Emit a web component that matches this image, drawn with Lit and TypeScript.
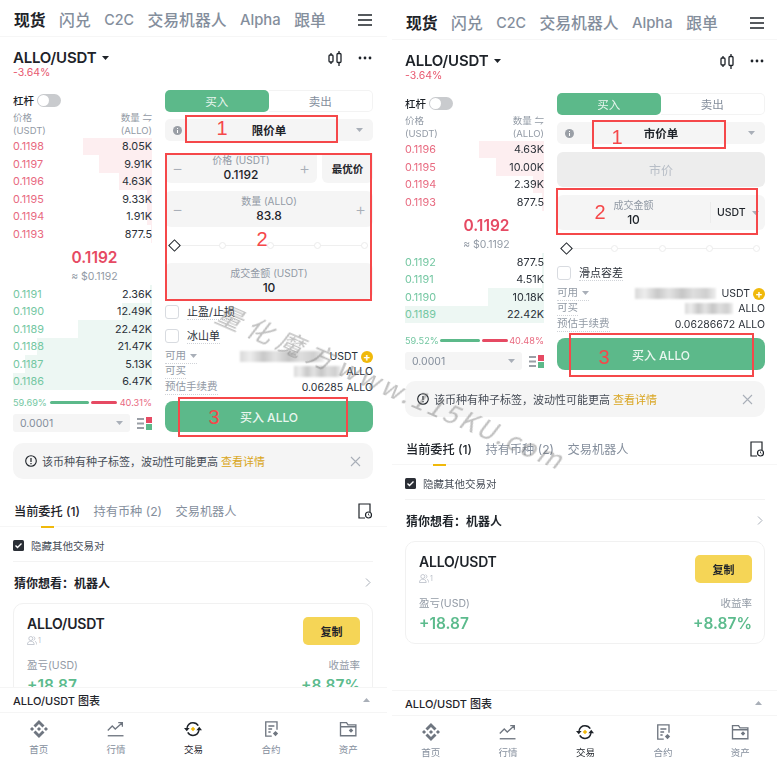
import { LitElement, html, css, svg } from "lit";
import { customElement, property } from "lit/decorators.js";

type Row = { p: string; q: string; from: number };
type Note = { x: number; y: number; w: number; h: number; n: string; nx: number; ny: number };

const BOOK: Record<string, { asks: Row[]; bids: Row[]; g: string; r: string; gw: number; rw: number }> = {
  limit: {
    asks: [
      { p: "0.1198", q: "8.05K", from: 70 },
      { p: "0.1197", q: "9.91K", from: 86 },
      { p: "0.1196", q: "4.63K", from: 106 },
      { p: "0.1195", q: "9.33K", from: 134 },
      { p: "0.1194", q: "1.91K", from: 134 },
      { p: "0.1193", q: "877.5", from: 138 },
    ],
    bids: [
      { p: "0.1191", q: "2.36K", from: 137 },
      { p: "0.1190", q: "12.49K", from: 109 },
      { p: "0.1189", q: "22.42K", from: 65 },
      { p: "0.1188", q: "21.47K", from: 24 },
      { p: "0.1187", q: "5.13K", from: 12 },
      { p: "0.1186", q: "6.47K", from: 0 },
    ],
    g: "59.69%",
    r: "40.31%",
    gw: 39,
    rw: 26,
  },
  market: {
    asks: [
      { p: "0.1196", q: "4.63K", from: 74 },
      { p: "0.1195", q: "10.00K", from: 91 },
      { p: "0.1194", q: "2.39K", from: 128 },
      { p: "0.1193", q: "877.5", from: 137 },
    ],
    bids: [
      { p: "0.1192", q: "877.5", from: 137 },
      { p: "0.1191", q: "4.51K", from: 137 },
      { p: "0.1190", q: "10.18K", from: 83 },
      { p: "0.1189", q: "22.42K", from: 0 },
    ],
    g: "59.52%",
    r: "40.48%",
    gw: 40,
    rw: 26,
  },
};

const NOTES: Record<string, Note[]> = {
  limit: [
    { x: 185, y: 115, w: 153, h: 28, n: "1", nx: 222, ny: 128 },
    { x: 165, y: 153, w: 207, h: 148, n: "2", nx: 262, ny: 239 },
    { x: 178, y: 397, w: 170, h: 40, n: "3", nx: 214, ny: 417 },
  ],
  market: [
    { x: 200, y: 117, w: 134, h: 29, n: "1", nx: 225, ny: 134 },
    { x: 164, y: 185, w: 202, h: 47, n: "2", nx: 208, ny: 209 },
    { x: 177, y: 330, w: 185, h: 44, n: "3", nx: 212, ny: 354 },
  ],
};

const ico = (w: number, h: number, vb: string, body: unknown, cls = "") =>
  html`<svg class=${cls} width=${w} height=${h} viewBox=${vb} fill="none">${body}</svg>`;

const NAV = [
  {
    t: "首页",
    i: svg`<path fill="#6f7680" d="M16.624 13.92l2.717 2.716-7.353 7.353-7.353-7.352 2.717-2.717 4.636 4.66 4.636-4.66zm4.637-4.636L24 12l-2.715 2.716L18.568 12l2.693-2.716zm-9.272 0L14.705 12l-2.716 2.717L9.272 12l2.717-2.715zm-9.272 0L5.409 12l-2.692 2.692L0 12l2.717-2.716zM11.989.012l7.353 7.329-2.717 2.715-4.636-4.635-4.636 4.66-2.717-2.716 7.353-7.353z"/>`,
  },
  {
    t: "行情",
    i: svg`<path d="M1 14l6-6 4 4 9-8M15 3.500h5.500V9" stroke="#6f7680" stroke-width="1.700"/><path d="M1 21h21" stroke="#6f7680" stroke-width="1.800"/>`,
  },
  {
    t: "交易",
    on: true,
    i: svg`<path d="M4 10.500C5 6 8.500 3.500 12 3.500c3 0 5.500 1.300 7 4M20 13.500c-1 4.500-4.500 7-8 7-3 0-5.500-1.300-7-4" stroke="#1e2329" stroke-width="2"/><path d="M0 10.500h7.500L3.700 15zM24 13.500h-7.500L20.300 9z" fill="#1e2329"/><path d="M12 9l3 3-3 3-3-3z" fill="#f0b90b"/>`,
  },
  {
    t: "合约",
    i: svg`<path d="M20 13V2.500H5v19h8" stroke="#6f7680" stroke-width="1.800"/><path d="M8.500 8h8M8.500 12h5M8.500 16h3" stroke="#6f7680" stroke-width="1.800"/><path d="M18 14.500l3.500 3.500-3.500 3.500-3.500-3.500z" fill="#6f7680"/>`,
  },
  {
    t: "资产",
    i: svg`<path d="M2 9V3.500h8l2 3h10.500V21H2V9h20" stroke="#6f7680" stroke-width="1.800"/><path d="M16 11l3 3-3 3-3-3z" fill="#6f7680"/>`,
  },
];

const caret = html`<svg class="caret" width="7" height="4" viewBox="0 0 7 4"><path d="M0 0h7L3.500 4z" fill="#a9afb8"/></svg>`;

@customElement("trade-screen")
class TradeScreen extends LitElement {
  @property() mode = "limit";

  static styles = css`
    :host {
      display: block;
    }
    .screen {
      position: relative;
      display: flex;
      flex-direction: column;
      height: 768px;
      width: 387px;
      color: #1e2329;
      font-family: "Inter", "Noto Sans CJK SC", sans-serif;
      background: #fff;
    }
    .screen.market {
      margin-top: 3px;
    }
    .top {
      display: flex;
      align-items: center;
      gap: 13.500px;
      height: 37px;
      flex: none;
      padding: 3px 15px 0 14px;
      box-sizing: border-box;
      border-bottom: 1px solid #f6f6f6;
      font-size: 15.800px;
      font-weight: 500;
      color: #848e9c;
    }
    .top .lat {
      font-size: 14.300px;
    }
    .top .alpha {
      font-size: 14.800px;
    }
    .top .on {
      color: #1e2329;
      font-weight: 700;
    }
    .top .menu {
      margin-left: auto;
    }
    .scroll {
      flex: 1;
      overflow: hidden;
      min-height: 0;
    }
    .pair {
      display: flex;
      align-items: flex-start;
      justify-content: space-between;
      padding: 11px 15px 0 13px;
      height: 53px;
      box-sizing: border-box;
    }
    .sym {
      display: flex;
      align-items: center;
      gap: 6px;
      font-size: 15px;
      font-weight: 600;
      line-height: 20px;
      letter-spacing: -0.2px;
    }
    .pct {
      font-size: 10.500px;
      line-height: 12px;
      color: #e8586f;
      margin-top: -1px;
    }
    .tools {
      display: flex;
      align-items: center;
      gap: 16px;
      height: 20px;
    }
    .main {
      display: flex;
      gap: 13px;
      padding: 0 14px 0 13px;
    }
    .book {
      width: 139px;
      flex: none;
      display: flex;
      flex-direction: column;
    }
    .lev {
      display: flex;
      align-items: center;
      gap: 3px;
      height: 20px;
      font-size: 10.500px;
      font-weight: 500;
    }
    .switch {
      width: 24px;
      height: 13px;
      border-radius: 7px;
      background: #c9cbce;
      position: relative;
    }
    .switch::after {
      content: "";
      position: absolute;
      left: 1px;
      top: 1px;
      width: 11px;
      height: 11px;
      border-radius: 50%;
      background: #fff;
    }
    .bh {
      display: flex;
      justify-content: space-between;
      font-size: 9.500px;
      line-height: 13px;
      color: #929aa5;
      height: 27.750px;
      padding-top: 1px;
      box-sizing: border-box;
    }
    .bh div:last-child {
      text-align: right;
    }
    .row {
      position: relative;
      display: flex;
      justify-content: space-between;
      align-items: center;
      height: 17.500px;
      font-size: 10.800px;
    }
    .row i {
      position: absolute;
      right: 0;
      top: 0;
      bottom: 0;
    }
    .row span {
      position: relative;
    }
    .ask b {
      color: #e8697f;
      font-weight: 400;
    }
    .bid b {
      color: #74c7a2;
      font-weight: 400;
    }
    .ask i {
      background: #fdeef0;
    }
    .bid i {
      background: #edf7f3;
    }
    .ask .vol,
    .bid .vol {
      color: #2b3139;
    }
    .mid {
      height: 42.500px;
      display: flex;
      flex-direction: column;
      align-items: center;
      padding-left: 24px;
      box-sizing: border-box;
    }
    .mid b {
      font-size: 15.500px;
      font-weight: 600;
      color: #e64a63;
      line-height: 18px;
      margin-top: 6px;
    }
    .mid span {
      font-size: 10.500px;
      line-height: 13px;
      margin-top: 3px;
      color: #929aa5;
    }
    .ratio {
      margin-top: auto;
      display: flex;
      align-items: center;
      justify-content: space-between;
      font-size: 9.200px;
      height: 12px;
      margin-bottom: 6px;
    }
    .ratio .g {
      color: #74c7a2;
    }
    .ratio .r {
      color: #e8697f;
    }
    .bars {
      display: flex;
      gap: 2px;
    }
    .bars u {
      height: 3px;
      border-radius: 2px;
      display: block;
    }
    .prec {
      display: flex;
      align-items: center;
      gap: 7px;
      height: 18px;
      font-size: 10.500px;
      color: #848e9c;
    }
    .prec div {
      flex: 1;
      align-self: stretch;
      display: flex;
      align-items: center;
      justify-content: space-between;
      padding: 0 7px;
      background: #f5f5f5;
      border-radius: 3px;
    }
    .form {
      width: 208px;
      flex: none;
      display: flex;
      flex-direction: column;
    }
    .side {
      display: flex;
      height: 22px;
      font-size: 11.500px;
      border-radius: 5px;
    }
    .side div {
      flex: 1;
      display: flex;
      align-items: center;
      justify-content: center;
      border: 1px solid #f3f3f3;
      border-left: none;
      border-radius: 0 5px 5px 0;
      color: #848e9c;
    }
    .side .buy {
      background: #5cb98a;
      color: #e9f6ef;
      border: none;
      border-radius: 5px;
    }
    .type {
      margin-top: 7px;
      height: 22px;
      display: flex;
      align-items: center;
      justify-content: space-between;
      background: #f5f5f5;
      border-radius: 5px;
      padding: 0 10px 0 8px;
      font-size: 11.500px;
      font-weight: 600;
    }
    .pricerow {
      margin-top: 12px;
      display: flex;
      gap: 5px;
      height: 30px;
    }
    .box {
      background: #f5f5f5;
      border-radius: 6px;
      display: flex;
      align-items: center;
      justify-content: space-between;
      padding: 0 7px;
      color: #a9afb8;
      font-size: 17px;
      font-weight: 300;
    }
    .pricerow .box {
      flex: 1;
      border-radius: 0 0 6px 6px;
    }
    .best {
      width: 51px;
      flex: none;
      background: #f5f5f5;
      border-radius: 0 0 6px 6px;
      display: flex;
      align-items: center;
      justify-content: center;
      font-size: 10.500px;
      font-weight: 600;
    }
    .qty {
      height: 36px;
      margin-top: 8px;
    }
    .fld {
      flex: 1;
      display: flex;
      flex-direction: column;
      align-items: center;
      min-width: 0;
    }
    .fld small {
      font-size: 10px;
      font-weight: 400;
      line-height: 13px;
      color: #929aa5;
    }
    .fld b {
      font-size: 12px;
      font-weight: 500;
      line-height: 15px;
      color: #1e2329;
    }
    .mkt {
      margin-top: 8px;
      height: 35px;
      border-radius: 6px;
      background: #ededed;
      display: flex;
      align-items: center;
      justify-content: center;
      font-size: 12px;
      color: #b7bdc6;
    }
    .mamt {
      margin-top: 8px;
      height: 35px;
      padding: 0;
    }
    .unit {
      width: 55px;
      height: 21px;
      flex: none;
      box-sizing: border-box;
      border-left: 1px solid #ececec;
      display: flex;
      align-items: center;
      gap: 6px;
      padding-left: 6px;
      font-size: 10.500px;
      font-weight: 500;
      color: #1e2329;
    }
    .slider {
      height: 36px;
      position: relative;
      display: flex;
      align-items: center;
      justify-content: space-between;
      padding: 0 5px 0 5px;
    }
    .slider::before {
      content: "";
      position: absolute;
      left: 9px;
      right: 5px;
      top: 50%;
      height: 1px;
      background: #efefef;
    }
    .slider em {
      position: relative;
      width: 5px;
      height: 5px;
      border-radius: 50%;
      background: #fff;
      border: 1px solid #ececec;
    }
    .slider em.d {
      width: 7px;
      height: 7px;
      border-radius: 0;
      border: 1px solid #1e2329;
      transform: rotate(45deg);
    }
    .total {
      height: 36px;
    }
    .checks {
      display: flex;
      flex-direction: column;
      gap: 10px;
      margin-top: 6px;
    }
    .checks.one {
      margin-top: 0;
    }
    .chk {
      display: flex;
      align-items: center;
      gap: 8px;
      height: 14px;
      font-size: 11px;
      color: #2b3139;
    }
    .chk span:first-child {
      width: 12px;
      height: 12px;
      border: 1px solid #d8dbe0;
      border-radius: 3px;
    }
    .chk .dot,
    .info .dot {
      border-bottom: 1px dotted #d0d3d8;
      line-height: 14px;
    }
    .info {
      margin-top: 6px;
      display: flex;
      flex-direction: column;
    }
    .info div {
      display: flex;
      align-items: center;
      justify-content: space-between;
      height: 15.300px;
      font-size: 10.500px;
      color: #2b3139;
    }
    .info .dot {
      color: #929aa5;
      display: flex;
      align-items: center;
      gap: 4px;
    }
    .val {
      display: flex;
      align-items: center;
      gap: 2px;
    }
    .moz {
      height: 11px;
      background: linear-gradient(90deg, #d9d9d9, #ededed 12%, #c8c8c8 28%, #e3e3e3 42%, #c6c6c6 58%, #dedede 72%, #cfcfcf 88%, #eee);
      filter: blur(0.8px);
    }
    .plus {
      width: 12px;
      height: 12px;
      border-radius: 50%;
      background: #f0b90b;
      color: #fff;
      font-size: 11px;
      line-height: 12px;
      text-align: center;
      font-weight: 700;
      margin-left: 1px;
    }
    .cta {
      margin-top: 6.500px;
      height: 32px;
      border-radius: 8px;
      background: #5cb98a;
      color: #e9f6ef;
      display: flex;
      align-items: center;
      justify-content: center;
      font-size: 12px;
      font-weight: 500;
    }
    .limit .cta {
      height: 31px;
    }
    .notice {
      margin: 11px 14px 0 13px;
      height: 36px;
      border-radius: 10px;
      background: #f5f5f5;
      display: flex;
      align-items: center;
      gap: 5px;
      padding: 0 12px;
      font-size: 11px;
      color: #474d57;
    }
    .notice a {
      color: #d9a520;
    }
    .notice svg:last-child {
      margin-left: auto;
    }
    .tabs {
      margin-top: 18px;
      height: 30px;
      box-sizing: border-box;
      border-bottom: 1px solid #f6f6f6;
      display: flex;
      align-items: center;
      gap: 13.500px;
      padding: 0 15px 2px 14px;
      font-size: 12.200px;
      color: #848e9c;
    }
    .tabs .on {
      color: #1e2329;
      font-weight: 500;
      position: relative;
    }
    .tabs .on::after {
      content: "";
      position: absolute;
      left: 27px;
      width: 13px;
      bottom: -8px;
      height: 2px;
      background: #f0b90b;
    }
    .tabs svg {
      margin-left: auto;
    }
    .hide {
      margin: 0 14px 0 13px;
      height: 32px;
      padding-top: 2px;
      display: flex;
      align-items: center;
      gap: 7px;
      font-size: 10.500px;
      color: #474d57;
      border-bottom: 1px solid #f3f3f3;
    }
    .cb {
      width: 11px;
      height: 11px;
      background: #2b2f36;
      border-radius: 1.500px;
      display: flex;
    }
    .guess {
      height: 41px;
      padding: 0 16px 0 14px;
      display: flex;
      align-items: center;
      justify-content: space-between;
      font-size: 12px;
      font-weight: 600;
    }
    .card {
      margin: 0 14px 0 13px;
      height: 103px;
      box-sizing: border-box;
      border: 1px solid #f1f1f1;
      border-radius: 10px;
      padding: 11px 12px 0 13px;
    }
    .c1 {
      display: flex;
      justify-content: space-between;
      height: 31px;
    }
    .ct {
      font-size: 14px;
      font-weight: 600;
      line-height: 18px;
      letter-spacing: -0.2px;
    }
    .ppl {
      display: flex;
      align-items: center;
      gap: 1px;
      font-size: 7px;
      color: #b7bdc6;
      margin-top: 3px;
    }
    .copy {
      width: 57px;
      height: 28px;
      border-radius: 5px;
      background: #f5d556;
      display: flex;
      align-items: center;
      justify-content: center;
      font-size: 11px;
      font-weight: 600;
      margin-top: 2px;
    }
    .c2 {
      display: flex;
      justify-content: space-between;
      align-items: flex-start;
      margin-top: 13px;
    }
    .c2 > div:last-child {
      text-align: right;
    }
    .c2 small {
      display: block;
      font-size: 10.500px;
      color: #929aa5;
      line-height: 14px;
    }
    .c2 b {
      display: block;
      font-size: 15.500px;
      font-weight: 600;
      color: #5cbb8d;
      line-height: 20px;
      margin-top: 3px;
    }
    .sheet {
      flex: none;
      height: 81px;
      border-top: 1px solid #f5f5f5;
      box-sizing: border-box;
      background: #fff;
      display: flex;
      flex-direction: column;
    }
    .sh {
      height: 24px;
      flex: none;
      padding: 0 17px 0 13px;
      display: flex;
      align-items: center;
      justify-content: space-between;
      font-size: 11px;
      font-weight: 500;
      border-bottom: 1px solid #f5f5f5;
    }
    .navs {
      display: grid;
      grid-template-columns: repeat(5, 1fr);
      padding-top: 7px;
    }
    .navs div {
      display: flex;
      flex-direction: column;
      align-items: center;
      font-size: 9.500px;
      color: #848e9c;
      gap: 6px;
      line-height: 12px;
    }
    .navs .on {
      color: #1e2329;
    }
    .mark {
      position: absolute;
      box-sizing: border-box;
      border: 2px solid #f5484a;
      pointer-events: none;
    }
    .digit {
      position: absolute;
      font-family: "Liberation Sans", sans-serif;
      font-weight: 400;
      font-size: 20px;
      line-height: 20px;
      color: #f5484a;
      transform: translate(-50%, -50%);
    }
  `;

  private renderBook() {
    const d = BOOK[this.mode];
    const rows = (list: Row[], cls: string) =>
      list.map(
        (r) => html`<div class="row ${cls}">
          <i style="left:${r.from}px"></i><span><b>${r.p}</b></span><span class="vol">${r.q}</span>
        </div>`
      );
    return html`<div class="book">
      <div class="lev">杠杆 <span class="switch"></span></div>
      <div class="bh">
        <div>价格<br />(USDT)</div>
        <div>数量 ⇋<br />(ALLO)</div>
      </div>
      ${rows(d.asks, "ask")}
      <div class="mid"><b>0.1192</b><span>≈ $0.1192</span></div>
      ${rows(d.bids, "bid")}
      <div class="ratio">
        <span class="g">${d.g}</span>
        <span class="bars"
          ><u style="width:${d.gw}px;background:#5cb98a"></u><u style="width:${d.rw}px;background:#e64a63"></u
        ></span>
        <span class="r">${d.r}</span>
      </div>
      <div class="prec">
        <div>0.0001 ${caret}</div>
        ${ico(
          15,
          13,
          "0 0 15 13",
          svg`<path d="M0 1h7v2H0zM0 5.500h7v2H0zM0 10h7v2H0z" fill="#9a9fa6"/><path d="M9 0h6v6H9z" fill="#e64a63"/><path d="M9 7h6v6H9z" fill="#5cb98a"/>`
        )}
      </div>
    </div>`;
  }

  private renderLimit() {
    const pm = (s: string) => html`<span>${s}</span>`;
    return html`
      <div class="pricerow">
        <div class="box">
          ${pm("−")}
          <div class="fld"><small>价格 (USDT)</small><b>0.1192</b></div>
          ${pm("+")}
        </div>
        <div class="best">最优价</div>
      </div>
      <div class="box qty">
        ${pm("−")}
        <div class="fld"><small>数量 (ALLO)</small><b>83.8</b></div>
        ${pm("+")}
      </div>
      ${this.renderSlider()}
      <div class="box total">
        <div class="fld"><small>成交金额 (USDT)</small><b>10</b></div>
      </div>
      <div class="checks">
        <div class="chk"><span></span><span class="dot">止盈/止损</span></div>
        <div class="chk"><span></span><span class="dot">冰山单</span></div>
      </div>
    `;
  }

  private renderMarket() {
    return html`
      <div class="mkt">市价</div>
      <div class="box mamt">
        <div class="fld"><small>成交金额</small><b>10</b></div>
        <span class="unit">USDT ${caret}</span>
      </div>
      ${this.renderSlider()}
      <div class="checks one">
        <div class="chk"><span></span><span class="dot">滑点容差</span></div>
      </div>
    `;
  }

  private renderSlider() {
    return html`<div class="slider"><em class="d"></em><em></em><em></em><em></em><em></em></div>`;
  }

  render() {
    const limit = this.mode === "limit";
    return html`<div class="screen ${this.mode}">
      <div class="top">
        <span class="on">现货</span><span>闪兑</span><span class="lat">C2C</span><span>交易机器人</span><span class="alpha">Alpha</span
        ><span>跟单</span>
        ${ico(14, 12, "0 0 14 12", svg`<path d="M0 1h14M0 6h14M0 11h14" stroke="#1e2329" stroke-width="1.300"/>`, "menu")}
      </div>
      <div class="scroll">
        <div class="pair">
          <div>
            <div class="sym">
              ALLO/USDT
              <svg width="7" height="4" viewBox="0 0 7 4"><path d="M0 0h7L3.500 4z" fill="#1e2329" /></svg>
            </div>
            <div class="pct">-3.64%</div>
          </div>
          <div class="tools">
            ${ico(
              14,
              15,
              "0 0 14 15",
              svg`<rect x="1" y="4" width="4" height="7" rx="1" stroke="#1e2329" stroke-width="1.300"/><rect x="9" y="2.500" width="4" height="9" rx="1" stroke="#1e2329" stroke-width="1.300"/><path d="M3 2v2M3 11v2M11 0v2.500M11 11.500V15" stroke="#1e2329" stroke-width="1.300"/>`
            )}
            ${ico(14, 4, "0 0 14 4", svg`<circle cx="2" cy="2" r="1.400" fill="#1e2329"/><circle cx="7" cy="2" r="1.400" fill="#1e2329"/><circle cx="12" cy="2" r="1.400" fill="#1e2329"/>`)}
          </div>
        </div>
        <div class="main">
          ${this.renderBook()}
          <div class="form">
            <div class="side"><div class="buy">买入</div><div>卖出</div></div>
            <div class="type">
              ${ico(9, 9, "0 0 9 9", svg`<circle cx="4.500" cy="4.500" r="4.500" fill="#9a9fa6"/><path d="M4.500 4v3M4.500 2v1" stroke="#fff"/>`)}
              <span>${limit ? "限价单" : "市价单"}</span>
              ${caret}
            </div>
            ${limit ? this.renderLimit() : this.renderMarket()}
            <div class="info">
              <div>
                <span class="dot">可用 ${caret}</span>
                <span class="val"><span class="moz" style="width:${limit ? 84 : 81}px"></span>&nbsp;USDT<span class="plus">+</span></span>
              </div>
              <div>
                <span class="dot">可买</span>
                <span class="val"><span class="moz" style="width:${limit ? 47 : 48}px"></span>&nbsp;ALLO</span>
              </div>
              <div><span class="dot">预估手续费</span><span>${limit ? "0.06285" : "0.06286672"} ALLO</span></div>
            </div>
            <div class="cta">买入 ALLO</div>
          </div>
        </div>
        <div class="notice">
          ${ico(12, 12, "0 0 12 12", svg`<circle cx="6" cy="6" r="5.300" stroke="#1e2329" stroke-width="1.100"/><path d="M6 3v4M6 8v1.300" stroke="#1e2329" stroke-width="1.200"/>`)}
          <span>该币种有种子标签，波动性可能更高 <a>查看详情</a></span>
          ${ico(11, 11, "0 0 11 11", svg`<path d="M1 1l9 9M10 1l-9 9" stroke="#a9afb8" stroke-width="1.100"/>`)}
        </div>
        <div class="tabs">
          <span class="on">当前委托 (1)</span><span>持有币种 (2)</span><span>交易机器人</span>
          ${ico(
            14,
            16,
            "0 0 14 16",
            svg`<path d="M7 15H1V1h11v8" stroke="#1e2329" stroke-width="1.200"/><circle cx="10.500" cy="12" r="3" stroke="#1e2329" stroke-width="1.200"/><path d="M10.500 10.500V12l1 .8" stroke="#1e2329" stroke-width=".8"/>`
          )}
        </div>
        <div class="hide">
          <span class="cb">${ico(11, 11, "0 0 11 11", svg`<path d="M2.500 5.500l2 2 4-4" stroke="#fff" stroke-width="1.400"/>`)}</span>
          隐藏其他交易对
        </div>
        <div class="guess">
          <span>猜你想看：机器人</span>
          ${ico(6, 9, "0 0 6 9", svg`<path d="M1 .5l4 4-4 4" stroke="#a9afb8" stroke-width="1"/>`)}
        </div>
        <div class="card">
          <div class="c1">
            <div>
              <div class="ct">ALLO/USDT</div>
              <div class="ppl">
                ${ico(
                  10,
                  9,
                  "0 0 10 9",
                  svg`<circle cx="3.800" cy="2.500" r="2" stroke="#b7bdc6" stroke-width=".8"/><path d="M.4 8.500c0-2 1.400-3.300 3.400-3.300s3.400 1.300 3.400 3.300zM6.500.6a2 2 0 010 3.800M8 5.200c1 .5 1.700 1.700 1.700 3.300" stroke="#b7bdc6" stroke-width=".8"/>`
                )}1
              </div>
            </div>
            <div class="copy">复制</div>
          </div>
          <div class="c2">
            <div><small>盈亏(USD)</small><b>+18.87</b></div>
            <div><small>收益率</small><b>+8.87%</b></div>
          </div>
        </div>
      </div>
      <div class="sheet">
        <div class="sh">
          <span>ALLO/USDT 图表</span>
          <svg width="7" height="4" viewBox="0 0 7 4"><path d="M0 4h7L3.500 0z" fill="#a9afb8" /></svg>
        </div>
        <div class="navs">
          ${NAV.map(
            (n) => html`<div class=${n.on ? "on" : ""}>
              <svg width="18" height="18" viewBox="0 0 24 24" fill="none">${n.i}</svg>
              ${n.t}
            </div>`
          )}
        </div>
      </div>
      ${NOTES[this.mode].map(
        (a) => html`<div class="mark" style="left:${a.x}px;top:${a.y}px;width:${a.w}px;height:${a.h}px"></div>
          <div class="digit" style="left:${a.nx}px;top:${a.ny}px">${a.n}</div>`
      )}
    </div>`;
  }
}

@customElement("app-root")
class AppRoot extends LitElement {
  static styles = css`
    :host {
      display: block;
      width: 777px;
      height: 768px;
      overflow: hidden;
      position: relative;
      background: #fff;
    }
    .pair {
      display: grid;
      grid-template-columns: 392px 385px;
      height: 768px;
      overflow: hidden;
      filter: blur(0.3px);
    }
    .wm {
      position: absolute;
      left: 218px;
      top: 294px;
      transform-origin: left center;
      transform: rotate(23.4deg);
      white-space: nowrap;
      font-family: "Noto Sans CJK SC", "Noto Sans", sans-serif;
      font-style: italic;
      font-size: 26px;
      line-height: 34px;
      color: rgba(120, 120, 120, 0.46);
      pointer-events: none;
    }
    .wm span {
      letter-spacing: 7px;
    }
    .wm em {
      letter-spacing: 3px;
    }
  `;

  render() {
    return html`<div class="pair">
        <trade-screen mode="limit"></trade-screen>
        <trade-screen mode="market"></trade-screen>
      </div>
      <div class="wm"><span>量化魔方</span><em>www.115KU.com</em></div>`;
  }
}
